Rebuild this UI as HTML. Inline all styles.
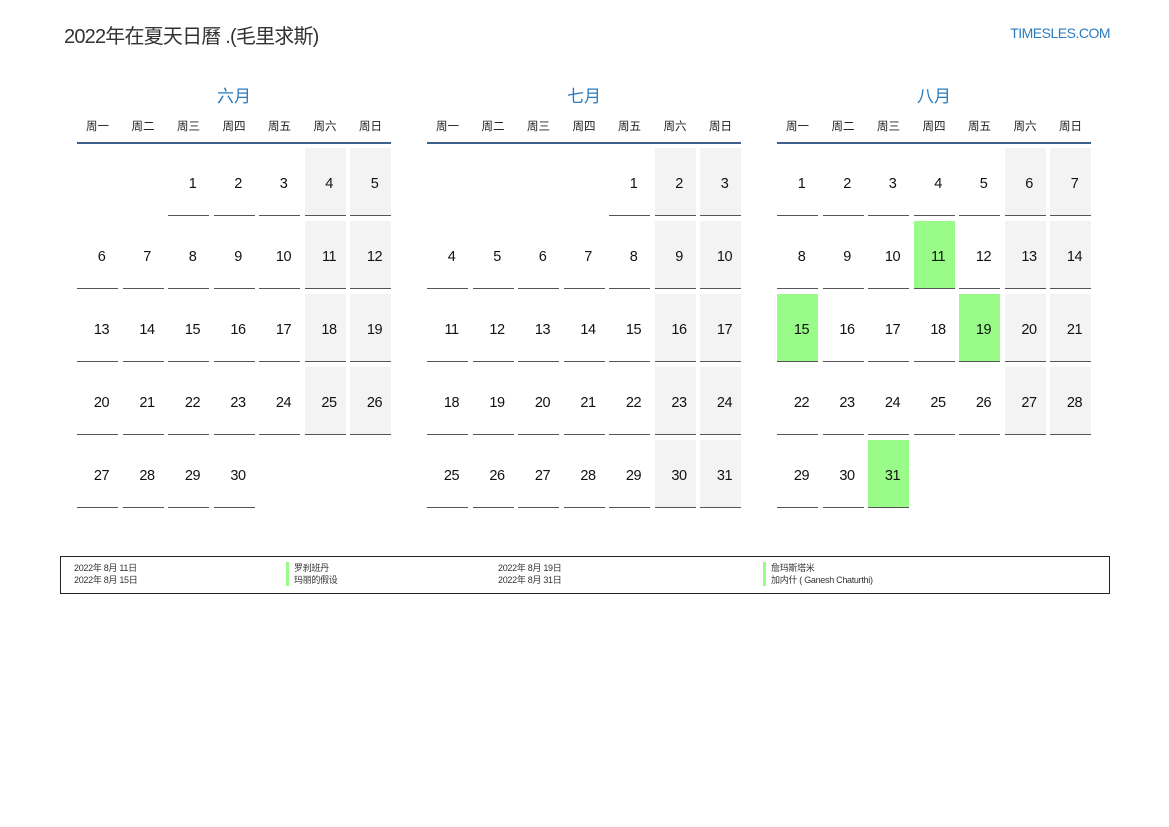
<!DOCTYPE html>
<html><head><meta charset="utf-8"><style>
body{margin:0;width:1169px;height:827px;background:#fff;font-family:"Liberation Sans","Noto Sans CJK SC",sans-serif;position:relative;overflow:hidden}
.title{position:absolute;left:64px;top:20px;font-size:20px;color:#333;letter-spacing:-0.8px}
.site{position:absolute;right:59px;top:25px;font-size:14px;color:#2a7ac0;letter-spacing:-0.5px}
.m{position:absolute;top:85px;width:314px}
.mt{text-align:center;color:#2a7ac0;font-size:17px;height:26px;line-height:24px}
.wd{display:grid;grid-template-columns:repeat(7,41px);column-gap:4.5px;font-size:11.5px;color:#222;text-align:center;height:31px;line-height:33px;border-bottom:2px solid #3d5f8c}
.g{display:grid;grid-template-columns:repeat(7,41px);column-gap:4.5px;row-gap:5px;margin-top:4px}
.g div{height:68px;line-height:72px;padding-left:8px;text-align:center;font-size:14.5px;color:#111;border-bottom:1px solid #555;box-sizing:border-box;letter-spacing:-0.5px}
.g div.e{border:none}
.g div.w{background:#f3f3f3}
.g div.h{background:#99fb88}
.leg{position:absolute;left:60px;top:556px;width:1048px;height:36px;border:1px solid #222;font-size:9px;color:#333}
.leg span{position:absolute;line-height:12px;letter-spacing:-0.3px}
.bar{border-left:3px solid #99fb88;padding-left:5px}
</style></head><body>
<div class="title">2022年在夏天日曆 .(毛里求斯)</div>
<div class="site">TIMESLES.COM</div>

<div class="m" style="left:77px"><div class="mt">六月</div>
<div class="wd"><span>周一</span><span>周二</span><span>周三</span><span>周四</span><span>周五</span><span>周六</span><span>周日</span></div>
<div class="g">
<div class="e"></div><div class="e"></div><div>1</div><div>2</div><div>3</div><div class="w">4</div><div class="w">5</div>
<div>6</div><div>7</div><div>8</div><div>9</div><div>10</div><div class="w">11</div><div class="w">12</div>
<div>13</div><div>14</div><div>15</div><div>16</div><div>17</div><div class="w">18</div><div class="w">19</div>
<div>20</div><div>21</div><div>22</div><div>23</div><div>24</div><div class="w">25</div><div class="w">26</div>
<div>27</div><div>28</div><div>29</div><div>30</div>
</div></div>

<div class="m" style="left:427px"><div class="mt">七月</div>
<div class="wd"><span>周一</span><span>周二</span><span>周三</span><span>周四</span><span>周五</span><span>周六</span><span>周日</span></div>
<div class="g">
<div class="e"></div><div class="e"></div><div class="e"></div><div class="e"></div><div>1</div><div class="w">2</div><div class="w">3</div>
<div>4</div><div>5</div><div>6</div><div>7</div><div>8</div><div class="w">9</div><div class="w">10</div>
<div>11</div><div>12</div><div>13</div><div>14</div><div>15</div><div class="w">16</div><div class="w">17</div>
<div>18</div><div>19</div><div>20</div><div>21</div><div>22</div><div class="w">23</div><div class="w">24</div>
<div>25</div><div>26</div><div>27</div><div>28</div><div>29</div><div class="w">30</div><div class="w">31</div>
</div></div>

<div class="m" style="left:777px"><div class="mt">八月</div>
<div class="wd"><span>周一</span><span>周二</span><span>周三</span><span>周四</span><span>周五</span><span>周六</span><span>周日</span></div>
<div class="g">
<div>1</div><div>2</div><div>3</div><div>4</div><div>5</div><div class="w">6</div><div class="w">7</div>
<div>8</div><div>9</div><div>10</div><div class="h">11</div><div>12</div><div class="w">13</div><div class="w">14</div>
<div class="h">15</div><div>16</div><div>17</div><div>18</div><div class="h">19</div><div class="w">20</div><div class="w">21</div>
<div>22</div><div>23</div><div>24</div><div>25</div><div>26</div><div class="w">27</div><div class="w">28</div>
<div>29</div><div>30</div><div class="h">31</div>
</div></div>

<div class="leg">
<span style="left:13px;top:5px">2022年 8月 11日</span>
<span style="left:13px;top:17px">2022年 8月 15日</span>
<span class="bar" style="left:225px;top:5px">罗刹班丹</span>
<span class="bar" style="left:225px;top:17px">玛丽的假设</span>
<span style="left:437px;top:5px">2022年 8月 19日</span>
<span style="left:437px;top:17px">2022年 8月 31日</span>
<span class="bar" style="left:702px;top:5px">詹玛斯塔米</span>
<span class="bar" style="left:702px;top:17px">加内什 ( Ganesh Chaturthi)</span>
</div>
</body></html>
